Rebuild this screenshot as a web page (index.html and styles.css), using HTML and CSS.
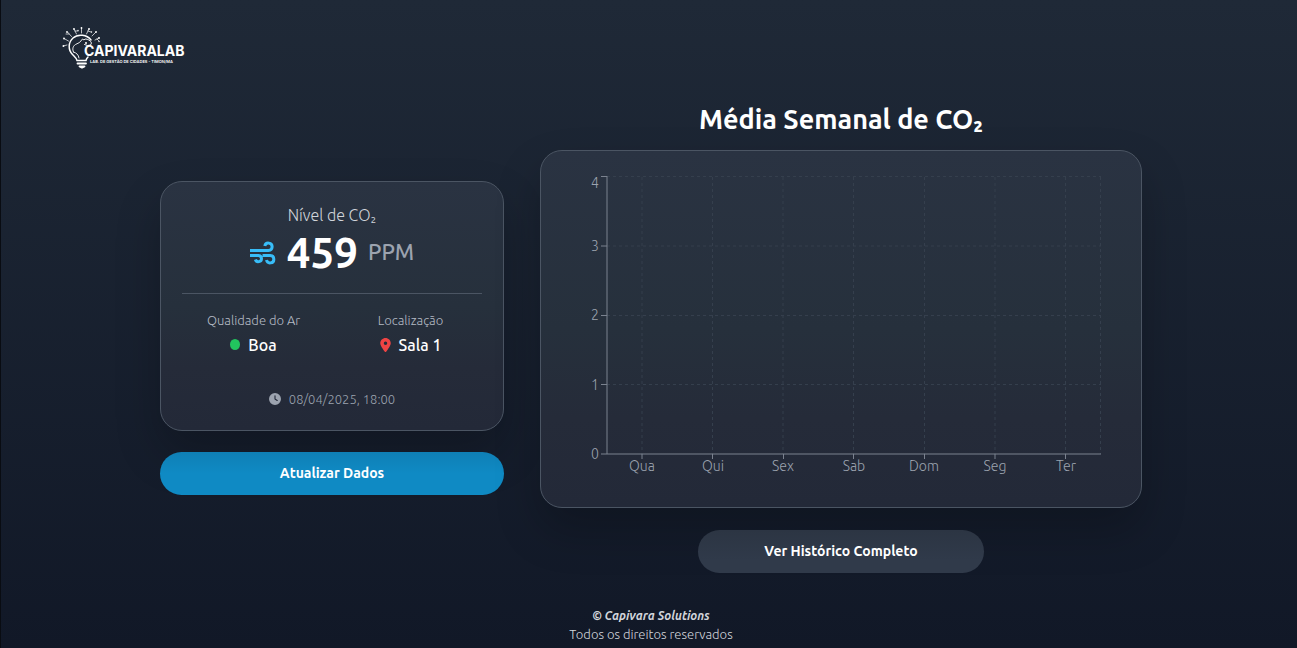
FILE: index.html
```html
<!DOCTYPE html>
<html lang="pt-BR">
<head>
<meta charset="utf-8">
<meta name="viewport" content="width=device-width, initial-scale=1">
<title>CapivaraLab</title>
<link rel="stylesheet" href="styles.css">
</head>
<body class="page">
<header class="header">
  <svg class="logo" viewBox="0 0 124 44" role="img" aria-label="CapivaraLab">
    <g fill="none" stroke="#fff" stroke-linecap="round" stroke-linejoin="round">
      <path stroke-width="1.500" d="M29 14C25 8.500 16 7.500 11 12c-5 4.500-5 12-.5 16.500 2.500 2.500 4 3.500 4.500 6h9c.3-1.500 1-2.500 2-3.500"/>
      <path stroke-width=".9" d="M11.500 26c-1.500-3-.5-6 2-7.500l4-2 3-3.500 1.500 1 1-1c3 0 5.500 1.500 6.500 4l-1 2-3 .5-3-1M11.500 26c3 1 5 2.500 5.500 6"/>
      <path stroke-width="1.800" d="M15.500 37.500h8.500M17.500 40.500h5l-2.500 1.200z"/>
      <path stroke-width=".7" d="M19.500 7V2M14.500 8 12 3M24.500 8 27 3M9.500 10.500 5.500 6M6.500 15 2 12.500M5 19l-4 1M30 10l4-4M33 14l4-2M13 5h3M26 5l3 1M7 8H4M35 13l2 2"/>
    </g>
    <g fill="#fff">
      <circle cx="19.500" cy="2" r=".9"/><circle cx="12" cy="3" r=".9"/><circle cx="16" cy="4.500" r=".7"/><circle cx="27" cy="3" r=".9"/><circle cx="29.500" cy="6" r=".7"/><circle cx="5" cy="6" r=".9"/><circle cx="2" cy="12.500" r=".9"/><circle cx="1.500" cy="20" r=".9"/><circle cx="34" cy="6" r=".9"/><circle cx="37" cy="12" r=".9"/><circle cx="37" cy="15.500" r=".7"/><circle cx="24" cy="17" r="1"/>
    </g>
    <text class="logo-name" x="22" y="30">CAPIVARALAB</text>
    <text class="logo-sub" x="28" y="37">LAB. DE GESTÃO DE CIDADES - TIMON/MA</text>
  </svg>
</header>
<main class="main">
  <section class="status">
    <div class="card level">
      <p class="level-label">Nível de CO₂</p>
      <div class="level-row">
        <svg class="wind" viewBox="0 0 26 24" fill="none" stroke="#38bdf8" stroke-width="3" aria-hidden="true">
          <path d="M0 9.500h18.500a3.700 3.700 0 1 0-3.700-4.500M0 14.500h8.500a3.100 3.100 0 1 1-3.100 4M12.500 14.500h7.700a3.700 3.700 0 1 1-3.700 4.500"/>
        </svg>
        <strong class="level-value">459</strong>
        <span class="level-unit">PPM</span>
      </div>
      <div class="facts">
        <div class="fact">
          <span class="fact-label">Qualidade do Ar</span>
          <span class="fact-value"><span class="dot"></span>Boa</span>
        </div>
        <div class="fact">
          <span class="fact-label">Localização</span>
          <span class="fact-value"><svg class="pin" viewBox="0 0 384 512" aria-hidden="true"><path fill="#ef4444" d="M215.700 499.200C267 435 384 279.400 384 192 384 86 298 0 192 0S0 86 0 192c0 87.400 117 243 168.300 307.200 12.300 15.300 35.100 15.300 47.400 0zM192 128a64 64 0 1 1 0 128 64 64 0 1 1 0-128z"/></svg>Sala 1</span>
        </div>
      </div>
      <p class="updated"><svg class="clock" viewBox="0 0 512 512" aria-hidden="true"><path fill="#9ca3af" d="M256 0a256 256 0 1 1 0 512 256 256 0 1 1 0-512zm-24 120v136c0 8 4 15.500 10.700 20l96 64c11 7.400 25.900 4.400 33.300-6.700s4.400-25.900-6.700-33.300L280 243.200V120c0-13.300-10.700-24-24-24s-24 10.700-24 24z"/></svg><time datetime="2025-04-08T18:00">08/04/2025, 18:00</time></p>
    </div>
    <button class="button button-primary" type="button">Atualizar Dados</button>
  </section>
  <section class="weekly">
    <h1 class="title">Média Semanal de CO₂</h1>
    <div class="card chart-card">
      <svg class="chart" viewBox="0 0 600 356" role="img" aria-label="Média semanal de CO₂">
        <g class="grid">
          <path d="M66 25.500H560M66 95H560M66 164.500H560M66 233.500H560"/>
          <path d="M101 26V303M171.500 26V303M242 26V303M312.500 26V303M383.500 26V303M454 26V303M524.500 26V303M559.500 26V303"/>
        </g>
        <path class="axis" d="M60 25.500H66M60 95H66M60 164.500H66M60 233.500H66M60 303H560M66 25V303M101 303v5M171.500 303v5M242.500 303v5M312.500 303v5M383.500 303v5M454 303v5M524.500 303v5"/>
        <g class="tick tick-y">
          <text x="58" y="37">4</text><text x="58" y="100">3</text><text x="58" y="169">2</text><text x="58" y="239">1</text><text x="58" y="308">0</text>
        </g>
        <g class="tick tick-x">
          <text x="101" y="320">Qua</text><text x="172" y="320">Qui</text><text x="242" y="320">Sex</text><text x="313" y="320">Sab</text><text x="383" y="320">Dom</text><text x="454" y="320">Seg</text><text x="525" y="320">Ter</text>
        </g>
      </svg>
    </div>
    <button class="button button-secondary" type="button">Ver Histórico Completo</button>
  </section>
</main>
<footer class="footer">
  <p class="footer-name">© Capivara Solutions</p>
  <p class="footer-rights">Todos os direitos reservados</p>
</footer>
</body>
</html>
```
FILE: styles.css
```css
* { box-sizing: border-box; }
.page {
  margin: 0;
  min-height: 100vh;
  display: flex;
  flex-direction: column;
  padding-left: 4px;
  border-left: 1px solid #090c12;
  background: linear-gradient(to bottom, #1f2937, #111827);
  color: #fff;
  font-family: Ubuntu, "Open Sans", "Noto Sans", sans-serif;
}
p, h1 { margin: 0; }
.header { padding: 26px 57px 0; }
.logo { display: block; width: 124px; height: 44px; }
.logo-name { fill: #fff; font: 700 14px Inter, sans-serif; }
.logo-sub { fill: #fff; font: 600 4px Inter, sans-serif; }
.main {
  flex: 1;
  display: grid;
  grid-template-columns: 344fr 602fr;
  gap: 36px;
  align-items: center;
  width: 100%;
  max-width: 982px;
  margin: 0 auto;
  padding: 30px 0 32px;
}
.status, .weekly { display: flex; flex-direction: column; }
.status { gap: 21px; }
.card {
  border: 1px solid #4b5563;
  border-radius: 22px;
  background: linear-gradient(to bottom, #2a3342, #26303c 50%, #252b39 75%, #232938);
  box-shadow: 0 22px 45px rgba(0, 0, 0, 0.22);
}
.level { padding: 21px; text-align: center; }
.level-label { color: #d1d5db; font-size: 16px; font-weight: 300; line-height: 24px; }
.level-row { display: flex; align-items: center; justify-content: center; height: 52px; }
.wind { width: 26px; height: 24px; margin-right: 11px; }
.level-value { font-size: 42px; line-height: 48px; font-weight: 700; }
.level-unit { margin-left: 10px; color: #9ca3af; font-size: 22px; line-height: 24px; font-weight: 500; padding-bottom: 2px; }
.facts {
  display: grid;
  grid-template-columns: 1fr 1fr;
  gap: 14px;
  margin-top: 14px;
  padding-top: 17px;
  border-top: 1px solid #4b5563;
}
.fact { display: flex; flex-direction: column; align-items: center; gap: 4px; }
.fact-label { color: #b4bac4; font-size: 13px; line-height: 18px; font-weight: 300; }
.fact-value { display: flex; align-items: center; font-size: 16px; line-height: 24px; font-weight: 500; }
.dot { width: 10px; height: 11px; margin-right: 8px; border-radius: 50%; background: #22c55e; }
.pin { width: 11px; height: 14px; margin-right: 8px; }
.updated { display: flex; align-items: center; justify-content: center; gap: 8px; margin-top: 32px; color: #9ca3af; font-size: 13px; line-height: 20px; font-weight: 300; }
.clock { width: 12px; height: 12px; }
.button {
  height: 43px;
  padding: 0 16px 1px;
  border: 0;
  border-radius: 22px;
  color: #fff;
  font-family: inherit;
  font-size: 14px;
  font-weight: 600;
  cursor: pointer;
}
.button-primary { background: linear-gradient(to bottom, #0f7fb5, #0f8ac4 50%); }
.button-secondary { align-self: center; width: 286px; margin-top: 22px; background: linear-gradient(to bottom, #2c3543, #303a4a 70%); }
.title { margin-bottom: 14px; font-size: 27px; line-height: 34px; font-weight: 600; text-align: center; }
.chart { display: block; width: 100%; height: auto; }
.grid { fill: none; stroke: #353f4d; stroke-dasharray: 3 3; }
.axis { fill: none; stroke: #7b828f; }
.tick { fill: #9ca3af; font-size: 14px; font-weight: 300; }
.tick-y { text-anchor: end; }
.tick-x { text-anchor: middle; }
.footer { padding-bottom: 5px; text-align: center; font-size: 13px; line-height: 18px; font-weight: 300; color: #d1d5db; }
.footer-name { font-size: 12px; font-weight: 600; font-style: italic; }
```
